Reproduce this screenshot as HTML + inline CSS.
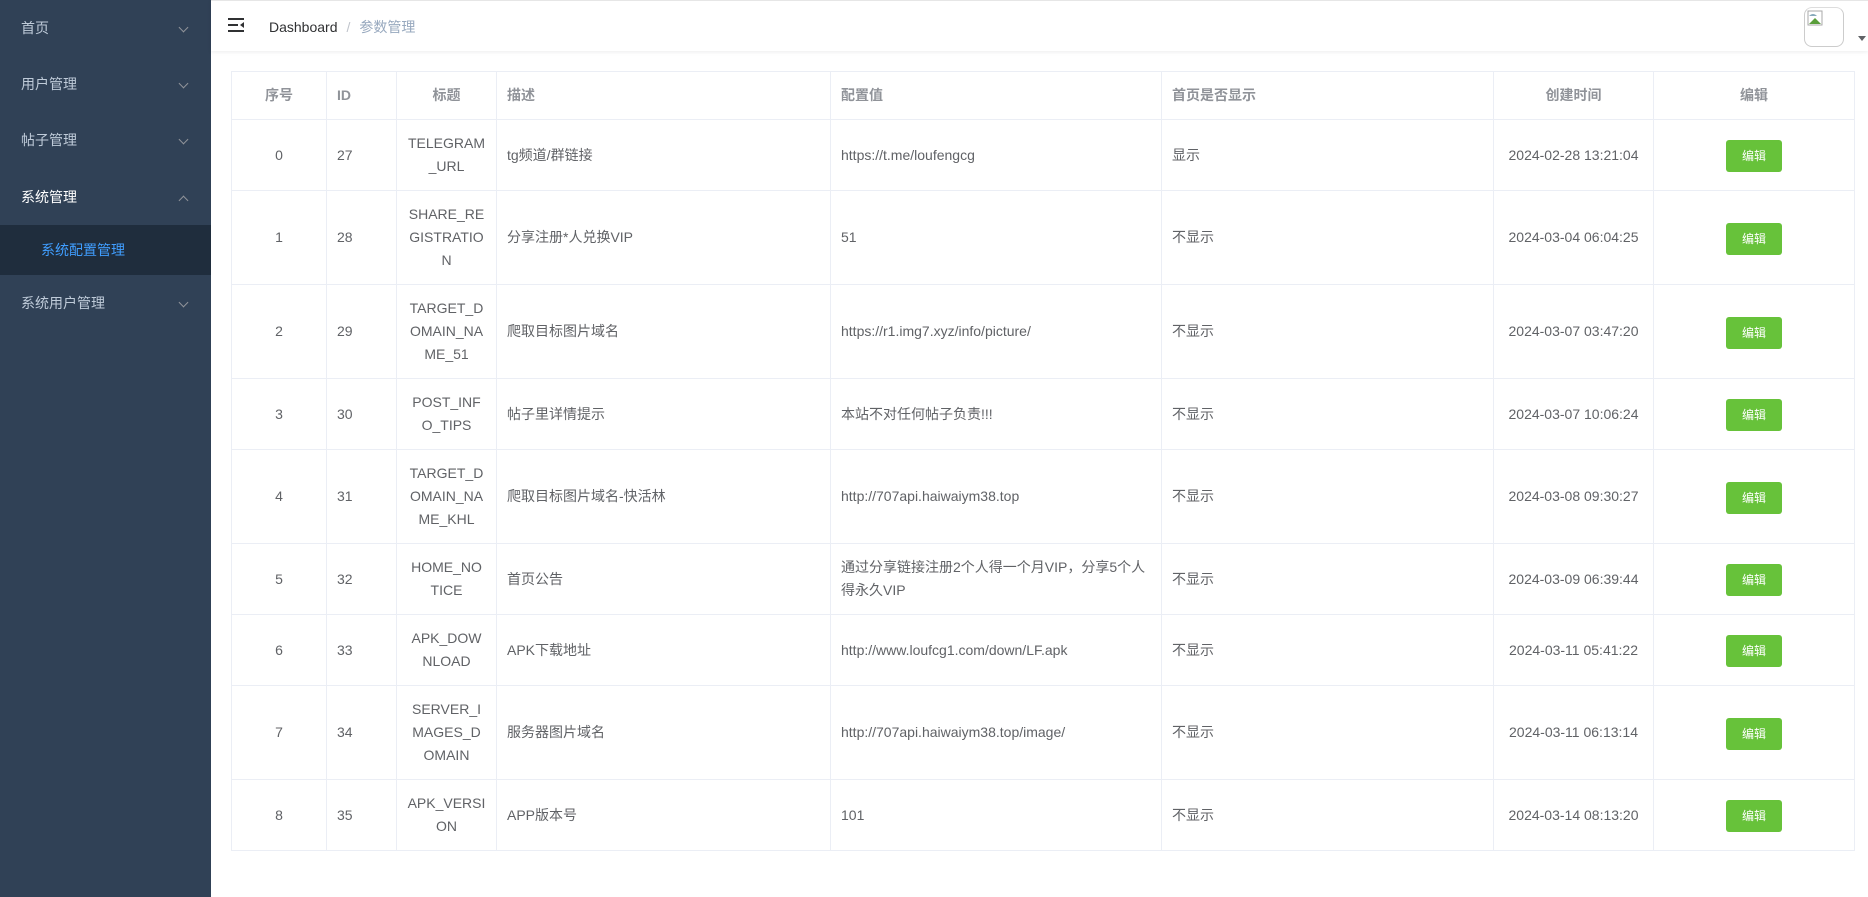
<!DOCTYPE html>
<html><head><meta charset="utf-8">
<style>
*{box-sizing:border-box;margin:0;padding:0}
html,body{width:1868px;height:897px;overflow:hidden;background:#fff;font-family:"Liberation Sans","Noto Sans CJK SC",sans-serif;font-size:14px}
.side{position:absolute;left:0;top:0;width:211px;height:897px;background:#304156}
.mi{position:absolute;left:0;width:211px;height:56px;line-height:56px;padding-left:21px;color:#bfcbd9;font-size:14px}
.mi.on{color:#fff}
.arr{position:absolute;left:180px;top:24px;width:7px;height:7px;border-right:1px solid #909399;border-bottom:1px solid #909399;transform:rotate(45deg)}
.arr.up{top:28px;transform:rotate(-135deg)}
.sub{position:absolute;left:0;top:225px;width:211px;height:50px;line-height:50px;background:#1f2d3d;color:#409eff;padding-left:41px}
.hdr{position:absolute;left:211px;top:0;width:1657px;height:51px;border-top:1px solid #e6e6e6;box-shadow:0 1px 4px rgba(0,21,41,.08);background:#fff}
.bc{position:absolute;left:58px;top:16px;font-size:14px;color:#303133}
.bc .sep{color:#c0c4cc;margin:0 9px}
.bc .cur{color:#97a8be}
.av{position:absolute;left:1593px;top:6px;width:40px;height:40px;border:1px solid #ccc;border-radius:8px;border-top-color:#ddd}
.caret{position:absolute;left:1647px;top:35px;width:0;height:0;border-left:4px solid transparent;border-right:4px solid transparent;border-top:5px solid #606266}
table{position:absolute;left:231px;top:71px;width:1623px;border-collapse:collapse;table-layout:fixed;color:#606266;font-size:14px}
td,th{border:1px solid #ebeef5;padding:0 10px;line-height:23px;vertical-align:middle;text-align:left;font-weight:normal}
th{color:#909399;font-weight:bold;height:48px}
.c{text-align:center}
.btn{display:inline-block;width:56px;height:32px;line-height:32px;background:#67c23a;color:#fff;border-radius:3px;font-size:12px;text-align:center;margin-top:2px}
</style></head><body>
<div class="side">
<div class="mi" style="top:0">首页<span class="arr"></span></div>
<div class="mi" style="top:56px">用户管理<span class="arr"></span></div>
<div class="mi" style="top:112px">帖子管理<span class="arr"></span></div>
<div class="mi on" style="top:169px">系统管理<span class="arr up"></span></div>
<div class="sub">系统配置管理</div>
<div class="mi" style="top:275px">系统用户管理<span class="arr"></span></div>
</div>
<div class="hdr">
<svg style="position:absolute;left:17px;top:17px" width="16" height="14" viewBox="0 0 16 14"><rect x="0" y="0" width="16" height="2" fill="#303133"/><rect x="0" y="6" width="10" height="2" fill="#303133"/><rect x="0" y="12" width="16" height="2" fill="#303133"/><path d="M16 4 L12 7 L16 10Z" fill="#303133"/></svg>
<div class="bc">Dashboard<span class="sep">/</span><span class="cur">参数管理</span></div>
<div class="av"><svg width="16" height="16" style="margin:2px"><rect x="1" y="1" width="14" height="14" fill="#fff" stroke="#aaa"/><path d="M2 14 L8 8 L14 14Z" fill="#5a9e3a"/><path d="M2 6 Q6 2 10 6" fill="#8ab" /></svg></div>
<div class="caret"></div>
</div>
<table>
<colgroup><col style="width:95px"><col style="width:70px"><col style="width:100px"><col style="width:334px"><col style="width:331px"><col style="width:332px"><col style="width:160px"><col style="width:201px"></colgroup>
<tr><th class="c">序号</th><th>ID</th><th class="c">标题</th><th>描述</th><th>配置值</th><th>首页是否显示</th><th class="c">创建时间</th><th class="c">编辑</th></tr>
<tr style="height:71px"><td class="c">0</td><td>27</td><td class="c">TELEGRAM<br>_URL</td><td>tg频道/群链接</td><td>https://t.me/loufengcg</td><td>显示</td><td class="c">2024-02-28 13:21:04</td><td class="c"><span class="btn">编辑</span></td></tr>
<tr style="height:94px"><td class="c">1</td><td>28</td><td class="c">SHARE_RE<br>GISTRATIO<br>N</td><td>分享注册*人兑换VIP</td><td>51</td><td>不显示</td><td class="c">2024-03-04 06:04:25</td><td class="c"><span class="btn">编辑</span></td></tr>
<tr style="height:94px"><td class="c">2</td><td>29</td><td class="c">TARGET_D<br>OMAIN_NA<br>ME_51</td><td>爬取目标图片域名</td><td>https://r1.img7.xyz/info/picture/</td><td>不显示</td><td class="c">2024-03-07 03:47:20</td><td class="c"><span class="btn">编辑</span></td></tr>
<tr style="height:71px"><td class="c">3</td><td>30</td><td class="c">POST_INF<br>O_TIPS</td><td>帖子里详情提示</td><td>本站不对任何帖子负责!!!</td><td>不显示</td><td class="c">2024-03-07 10:06:24</td><td class="c"><span class="btn">编辑</span></td></tr>
<tr style="height:94px"><td class="c">4</td><td>31</td><td class="c">TARGET_D<br>OMAIN_NA<br>ME_KHL</td><td>爬取目标图片域名-快活林</td><td>http://707api.haiwaiym38.top</td><td>不显示</td><td class="c">2024-03-08 09:30:27</td><td class="c"><span class="btn">编辑</span></td></tr>
<tr style="height:71px"><td class="c">5</td><td>32</td><td class="c">HOME_NO<br>TICE</td><td>首页公告</td><td>通过分享链接注册2个人得一个月VIP，分享5个人<br>得永久VIP</td><td>不显示</td><td class="c">2024-03-09 06:39:44</td><td class="c"><span class="btn">编辑</span></td></tr>
<tr style="height:71px"><td class="c">6</td><td>33</td><td class="c">APK_DOW<br>NLOAD</td><td>APK下载地址</td><td>http://www.loufcg1.com/down/LF.apk</td><td>不显示</td><td class="c">2024-03-11 05:41:22</td><td class="c"><span class="btn">编辑</span></td></tr>
<tr style="height:94px"><td class="c">7</td><td>34</td><td class="c">SERVER_I<br>MAGES_D<br>OMAIN</td><td>服务器图片域名</td><td>http://707api.haiwaiym38.top/image/</td><td>不显示</td><td class="c">2024-03-11 06:13:14</td><td class="c"><span class="btn">编辑</span></td></tr>
<tr style="height:71px"><td class="c">8</td><td>35</td><td class="c">APK_VERSI<br>ON</td><td>APP版本号</td><td>101</td><td>不显示</td><td class="c">2024-03-14 08:13:20</td><td class="c"><span class="btn">编辑</span></td></tr>
</table>
</body></html>
